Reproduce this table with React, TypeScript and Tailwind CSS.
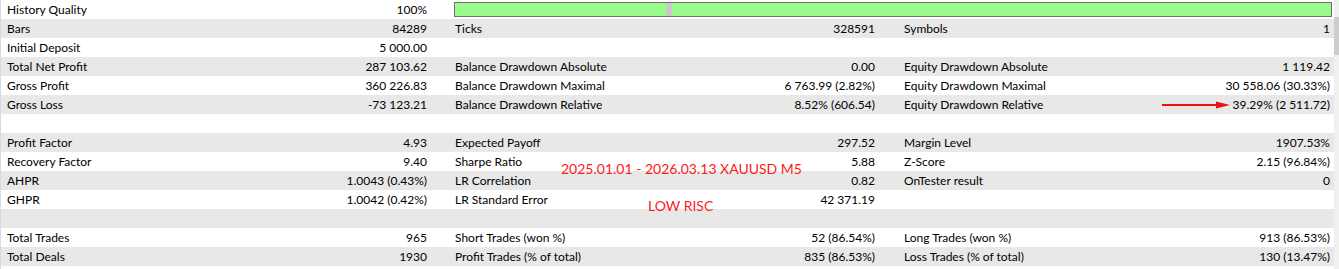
import React from "react";

type Cell = [string, string] | null;
type Row = { c1: Cell; c2: Cell; c3: Cell; bar?: boolean };

const rows: Row[] = [
  { c1: ["History Quality", "100%"], c2: null, c3: null, bar: true },
  { c1: ["Bars", "84289"], c2: ["Ticks", "328591"], c3: ["Symbols", "1"] },
  { c1: ["Initial Deposit", "5 000.00"], c2: null, c3: null },
  { c1: ["Total Net Profit", "287 103.62"], c2: ["Balance Drawdown Absolute", "0.00"], c3: ["Equity Drawdown Absolute", "1 119.42"] },
  { c1: ["Gross Profit", "360 226.83"], c2: ["Balance Drawdown Maximal", "6 763.99 (2.82%)"], c3: ["Equity Drawdown Maximal", "30 558.06 (30.33%)"] },
  { c1: ["Gross Loss", "-73 123.21"], c2: ["Balance Drawdown Relative", "8.52% (606.54)"], c3: ["Equity Drawdown Relative", "39.29% (2 511.72)"] },
  { c1: null, c2: null, c3: null },
  { c1: ["Profit Factor", "4.93"], c2: ["Expected Payoff", "297.52"], c3: ["Margin Level", "1907.53%"] },
  { c1: ["Recovery Factor", "9.40"], c2: ["Sharpe Ratio", "5.88"], c3: ["Z-Score", "2.15 (96.84%)"] },
  { c1: ["AHPR", "1.0043 (0.43%)"], c2: ["LR Correlation", "0.82"], c3: ["OnTester result", "0"] },
  { c1: ["GHPR", "1.0042 (0.42%)"], c2: ["LR Standard Error", "42 371.19"], c3: null },
  { c1: null, c2: null, c3: null },
  { c1: ["Total Trades", "965"], c2: ["Short Trades (won %)", "52 (86.54%)"], c3: ["Long Trades (won %)", "913 (86.53%)"] },
  { c1: ["Total Deals", "1930"], c2: ["Profit Trades (% of total)", "835 (86.53%)"], c3: ["Loss Trades (% of total)", "130 (13.47%)"] },
];

function CellView({ cell, className }: { cell: Cell; className: string }) {
  return (
    <div className={`flex items-center justify-between h-full ${className}`}>
      <span className="whitespace-nowrap">{cell ? cell[0] : ""}</span>
      <span className="whitespace-nowrap">{cell ? cell[1] : ""}</span>
    </div>
  );
}

export default function App() {
  return (
    <div
      className="relative w-[1339px] h-[269px] bg-white text-[12px] text-black overflow-hidden flex"
      style={{ fontFamily: "Lato, 'Liberation Sans', sans-serif" }}
    >
      <div className="w-[1px] h-full bg-[#d5dbe2]" />
      <div className="w-[1333px] flex flex-col">
        {rows.map((r, i) => (
          <div
            key={i}
            className={`h-[19px] flex ${i % 2 === 1 ? "bg-[#e8e8e8]" : "bg-white"}`}
          >
            <CellView cell={r.c1} className="w-[448px] pl-[6px] pr-[22px]" />
            {r.bar ? (
              <div className="flex-1 flex items-center pl-[5px] pr-[2px]">
                <div className="w-full h-[15px] border border-[#707070] bg-[#98fb8c] flex">
                  <div className="w-[211px]" />
                  <div className="w-[6px] bg-[#c8c8c8]" />
                </div>
              </div>
            ) : (
              <>
                <CellView cell={r.c2} className="w-[448px] pl-[6px] pr-[22px]" />
                <CellView cell={r.c3} className="flex-1 pl-[7px] pr-[4px]" />
              </>
            )}
          </div>
        ))}
      </div>
      <div className="w-[5px] h-full bg-[#f0f0f0] flex flex-col">
        <div className="h-[17px]" />
        <div className="h-[38px] bg-[#cdcdcd]" />
      </div>

      <div className="absolute left-[561px] top-[159px] text-[14px] leading-[20px] text-[#ff1a1a] whitespace-nowrap">
        2025.01.01 - 2026.03.13 XAUUSD M5
      </div>
      <div className="absolute left-[648px] top-[196px] text-[14px] leading-[20px] text-[#ff1a1a] whitespace-nowrap">
        LOW RISC
      </div>
      <svg className="absolute left-[1156px] top-[100px]" width="76" height="10" viewBox="0 0 76 10">
        <line x1="6" y1="5" x2="62" y2="5" stroke="#ee1111" strokeWidth="2" />
        <polygon points="60,1.5 74,5 60,8.5" fill="#ee1111" />
      </svg>
    </div>
  );
}
